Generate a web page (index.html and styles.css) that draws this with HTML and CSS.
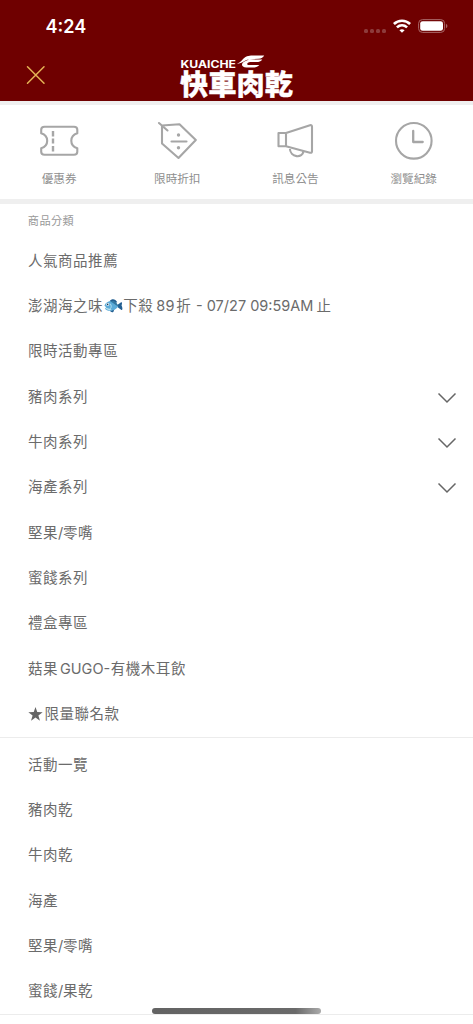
FILE: index.html
```html
<!DOCTYPE html>
<html lang="zh-Hant">
<head>
<meta charset="utf-8">
<meta name="viewport" content="width=device-width, initial-scale=1">
<title>快車肉乾</title>
<link rel="stylesheet" href="styles.css">
</head>
<body>
<header class="header">
  <div class="status">
    <span class="time">4:24</span>
    <div class="indicators">
      <span class="dots"><i></i><i></i><i></i><i></i></span>
      <svg class="wifi" width="18" height="14" viewBox="0 0 18 14" fill="none" stroke="#fff" stroke-width="2.6">
        <path d="M.9 5C5.5.6 12.500.6 17.100 5"/>
        <path d="M3.900 8.400c3-2.700 7.200-2.700 10.200 0"/>
        <path d="M6.400 11.200c1.600-1.300 3.600-1.300 5.200 0L9 13.800z" fill="#fff" stroke="none"/>
      </svg>
      <svg class="battery" width="30" height="14" viewBox="0 0 30 14">
        <rect x=".6" y=".6" width="26" height="12.800" rx="3.800" fill="none" stroke="#a96666" stroke-width="1"/>
        <rect x="2.200" y="2.200" width="22.800" height="9.600" rx="2.400" fill="#fff"/>
        <path d="M28 4.800c1.900.8 1.900 3.600 0 4.400z" fill="#a96666"/>
      </svg>
    </div>
  </div>
  <div class="brandbar">
    <svg class="close" width="20" height="20" viewBox="0 0 20 20" fill="none" stroke="#e6b455" stroke-width="1.500" stroke-linecap="round"><path d="M1.500 1.700l16.500 16.500M18 1.700l-16.500 16.500"/></svg>
    <svg class="logo" width="114" height="46" viewBox="0 0 114 46" fill="#fff">
      <text class="logo-latin" x=".5" y="13" textLength="55.500" lengthAdjust="spacingAndGlyphs">KUAICHE</text>
      <path d="M57 8.700C61.500 7.500 62.500 3 67 1.300c1.700-.7 3.500-.8 5.500-.8h11.700c-1 2-2.800 3-5.500 3.200l-9 .8h12.600c-1.300 2-3.300 2.500-6 2.500h-6c-3.300 0-4.300 3-1.300 3h10.300c-1.600 2-3.600 2.500-6.500 2.500h-6.300c-6 0-5.500-4.500-1.500-6.200l4-1.700c-4.500.3-7 4.300-12 4.100z"/>
      <text class="logo-han" x="0" y="40" textLength="113" lengthAdjust="spacingAndGlyphs">快車肉乾</text>
    </svg>
  </div>
</header>

<nav class="actions">
  <a class="action">
    <svg width="40" height="40" viewBox="0 0 40 40" class="line">
      <path d="M5.500 5.800h29.500c2 0 3.300 1 3.300 3v3.500c-8 2.500-8 12.500 0 15v3.500c0 2-1.300 3-3.300 3H5.500c-2 0-3.300-1-3.300-3v-3.500c8-2.500 8-12.500 0-15V8.800c0-2 1.300-3 3.300-3z"/>
      <path d="M14 10v5.500M14 17.500v5M14 25v5.500" stroke-width="2.400" stroke-linecap="butt"/>
    </svg>
    <span>優惠券</span>
  </a>
  <a class="action">
    <svg width="40" height="40" viewBox="0 0 40 40" class="line">
      <path d="M5 4.500l17.500-1.200L38.800 19 21.500 37 5 22.500zM2 2l8.500 7.500"/>
      <path d="M14.500 20.500h15"/>
      <circle cx="21.500" cy="14" r="1.700" class="dot"/><circle cx="21.500" cy="26.700" r="1.700" class="dot"/>
    </svg>
    <span>限時折扣</span>
  </a>
  <a class="action">
    <svg width="40" height="40" viewBox="0 0 40 40" class="line">
      <path d="M3.500 12h7.500v13.200H3.500zM11 12l24-7.800q2-.5 2 1.500v24.500q0 2-2 1.500l-24-6.500M14.800 26.800c0 10.500 13.500 10.500 13.500 3.500"/>
    </svg>
    <span>訊息公告</span>
  </a>
  <a class="action">
    <svg width="40" height="40" viewBox="0 0 40 40" class="line">
      <circle cx="19.800" cy="19.800" r="17.800"/><path d="M19.200 10v11h9.500" stroke-width="2.300"/>
    </svg>
    <span>瀏覽紀錄</span>
  </a>
</nav>

<main>
  <h2 class="heading">商品分類</h2>
  <ul class="list">
    <li>人氣商品推薦</li>
    <li><span>澎湖海之味</span><svg class="fish" width="20" height="16" viewBox="0 0 21 16">
      <path d="M7 3c2-3 6-2.800 8 1l-3 1zM7 12c1 3 3 3 4 2l1-3zM15 7l4-3c1.500-.3 1 1.200.5 3.500 1 2 1.400 5-.1 4.700L15 9z" fill="#245f91"/>
      <path d="M1.500 7.500C4 1.500 13 1 16 8c-3 6-12 6.500-14 2.500l1.500-1z" fill="#5cabd8"/>
      <path d="M7.500 3c4-1 7 1 8.500 5-2 0-5-3-8.500-5z" fill="#34779f"/>
      <path d="M2.200 9.700c2.500 1 5 1 7.300 2.700-3 .4-6-.2-7.300-2.700z" fill="#b9e2ef"/>
      <path d="M7.500 5.500c1.500 2 1.500 4 0 5.500" fill="none" stroke="#c0e5f3" stroke-width=".9"/>
      <circle cx="5" cy="6.300" r="1.500" fill="#fff"/><circle cx="4.900" cy="6.300" r=".8" fill="#173a55"/>
    </svg><span>下殺</span><span class="num">89</span><span>折 <span class="latin">- 07/27 09:59AM</span></span><span class="end">止</span></li>
    <li>限時活動專區</li>
    <li>豬肉系列<svg class="chevron" width="20" height="12" viewBox="0 0 20 12"><path d="M1.500 1.500L10 10l8.500-8.500"/></svg></li>
    <li>牛肉系列<svg class="chevron" width="20" height="12" viewBox="0 0 20 12"><path d="M1.500 1.500L10 10l8.500-8.500"/></svg></li>
    <li>海產系列<svg class="chevron" width="20" height="12" viewBox="0 0 20 12"><path d="M1.500 1.500L10 10l8.500-8.500"/></svg></li>
    <li>堅果<span class="slash">/</span>零嘴</li>
    <li>蜜餞系列</li>
    <li>禮盒專區</li>
    <li><span>菇果</span><span class="latin gugo">GUGO-</span><span>有機木耳飲</span></li>
    <li><svg class="star" width="15" height="14" viewBox="0 0 14 13.500"><path d="M7 0l1.700 4.900 5.200.1-4.100 3.200 1.500 5L7 10.200l-4.300 3 1.500-5L.1 5l5.200-.1z"/></svg><span>限量聯名款</span></li>
  </ul>
  <ul class="list second">
    <li>活動一覽</li>
    <li>豬肉乾</li>
    <li>牛肉乾</li>
    <li>海產</li>
    <li>堅果<span class="slash">/</span>零嘴</li>
    <li>蜜餞<span class="slash">/</span>果乾</li>
  </ul>
</main>
<div class="home"></div>
</body>
</html>
```

FILE: styles.css
```css
* { box-sizing: border-box; }
body {
  margin: 0;
  height: 1024px;
  overflow: hidden;
  background: #fff;
  color: #6b6b6b;
  font-family: Inter, "Noto Sans CJK TC", sans-serif;
}
.header {
  height: 105px;
  background: #6f0000;
  border-bottom: 4px solid #efefef;
  color: #fff;
}
.status {
  height: 52px;
  padding: 0 25px 0 45.500px;
  display: flex;
  align-items: center;
  justify-content: space-between;
}
.time { font-size: 18px; font-weight: 600; }
.indicators { display: flex; align-items: center; gap: 7px; }
.wifi { margin-right: .5px; }
.dots { display: flex; gap: 1.700px; padding-top: 9px; }
.dots i { width: 4px; height: 4px; border-radius: 1.500px; background: #8d3b3b; }
.brandbar {
  height: 49px;
  display: flex;
  align-items: flex-start;
  padding-left: 26px;
}
.close { margin-top: 13px; }
.logo { margin-left: 134px; margin-top: 2.500px; overflow: visible; }
.logo-latin { font: 700 10px Inter, sans-serif; }
.logo-han { font: 900 28.500px "Noto Sans CJK TC", sans-serif; stroke: #fff; stroke-width: .3px; }
.actions {
  height: 99px;
  display: grid;
  grid-template-columns: repeat(4, 118.200px);
  border-bottom: 5px solid #efefef;
}
.action {
  display: flex;
  flex-direction: column;
  align-items: center;
  padding-top: 16px;
  color: #8e8e8e;
  font-size: 11.600px;
  line-height: 16px;
}
.action svg { flex: none; }
.action span { margin-top: 10px; }
.line { fill: none; stroke: #a6a6a6; stroke-width: 2.100; stroke-linecap: round; stroke-linejoin: round; }
.line .dot { fill: #a6a6a6; stroke: none; }
.heading {
  margin: 0;
  height: 34px;
  padding-left: 27.800px;
  font-size: 11.200px;
  line-height: 34px;
  letter-spacing: .4px;
  font-weight: 400;
  color: #999;
}
.list {
  margin: 0;
  padding: 0;
  list-style: none;
  border-bottom: 1px solid #ececec;
  font-size: 14.500px;
  letter-spacing: .55px;
}
.list li {
  display: flex;
  align-items: center;
  height: 45.330px;
  padding: 0 16px 0 27.900px;
  line-height: 20px;
  white-space: pre;
}
.second { padding-top: 4.500px; }
.chevron { margin-left: auto; margin-top: 2px; fill: none; stroke: #666; stroke-width: 1.500; }
.fish { margin: 0; }
.num { margin: 0 1.500px 0 3px; letter-spacing: .3px; }
.latin { letter-spacing: 0; }
.slash { letter-spacing: -.2px; }
.gugo { margin: 0 .5px 0 2px; }
.end { margin-left: 3px; }
.star { margin: 0 1.500px 0 0; fill: #666; }
.home {
  position: absolute;
  left: 152px;
  top: 1008px;
  width: 169px;
  height: 6px;
  border-radius: 3px;
  background: linear-gradient(90deg, #636363 0%, #6a6a6a 85%, #aaa 100%);
}
```
